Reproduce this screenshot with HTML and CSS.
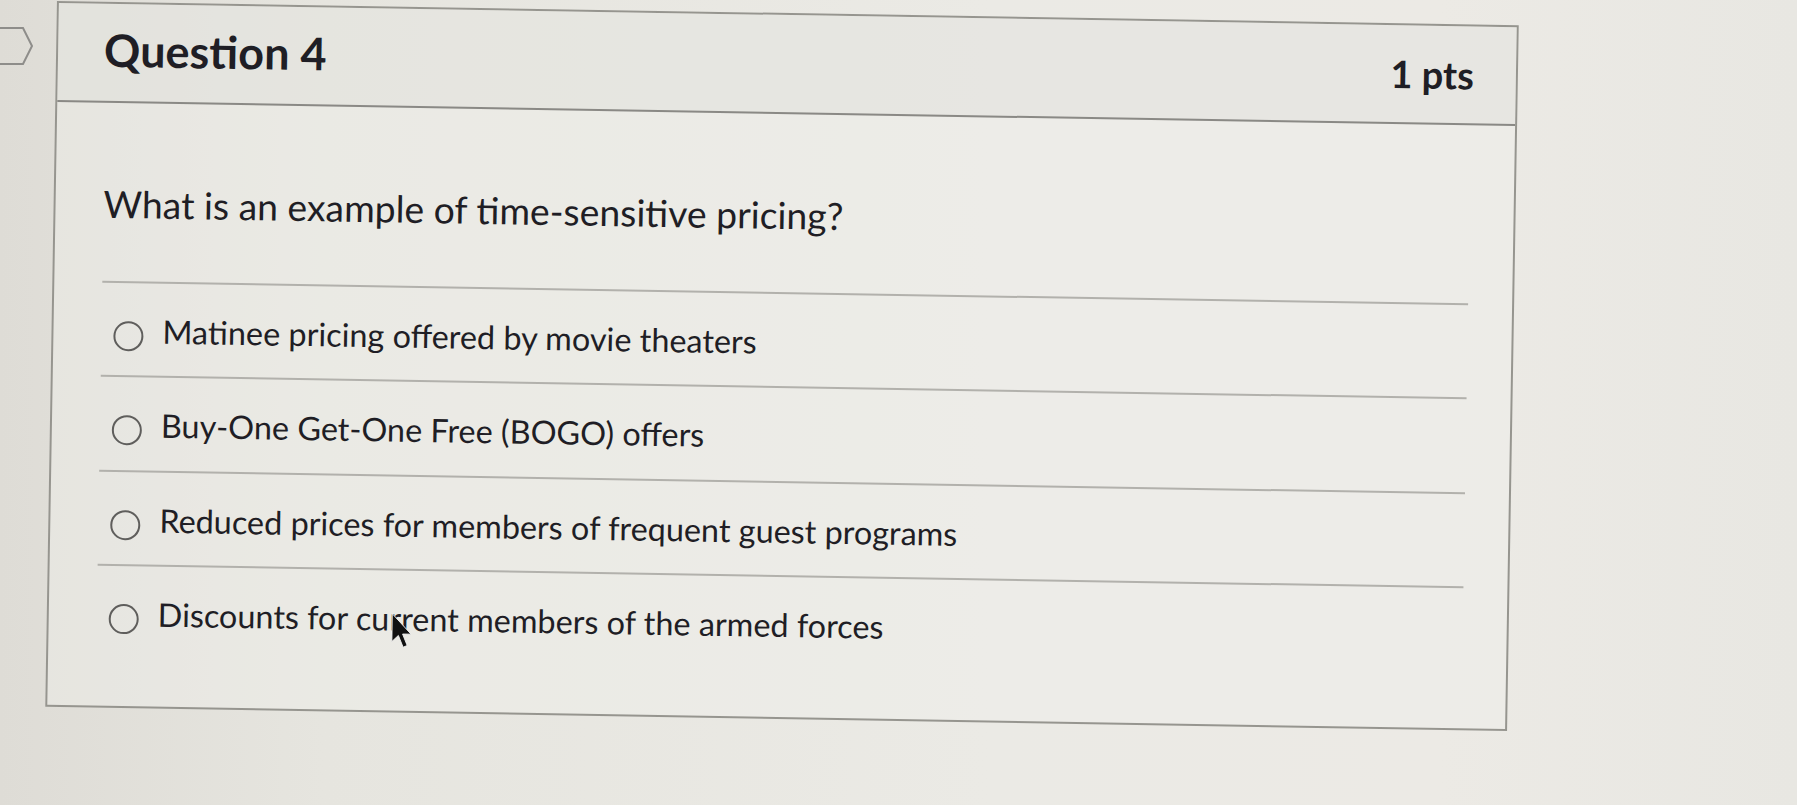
FILE: index.html
```html
<!DOCTYPE html>
<html lang="en">
<head>
<meta charset="utf-8">
<title>Question 4</title>
<link rel="stylesheet" href="styles.css">
</head>
<body>
<div class="page">
  <div class="flag-col">
    <svg class="flag" viewBox="0 0 34 40" aria-hidden="true"><path d="M-4 2 H23 L32 20 L23 38 H-4" /></svg>
  </div>
  <div class="quiz">
    <div class="quiz-header">
      <h2 class="q-title">Question 4</h2>
      <span class="q-points">1 pts</span>
    </div>
    <div class="quiz-body">
      <p class="q-text">What is an example of time-sensitive pricing?</p>
      <div class="answers">
        <label class="answer"><span class="radio"></span><span class="answer-text">Matinee pricing offered by movie theaters</span></label>
        <label class="answer"><span class="radio"></span><span class="answer-text">Buy-One Get-One Free (BOGO) offers</span></label>
        <label class="answer"><span class="radio"></span><span class="answer-text">Reduced prices for members of frequent guest programs</span></label>
        <label class="answer"><span class="radio"></span><span class="answer-text">Discounts for current members of the armed forces</span></label>
      </div>
      <svg class="cursor" viewBox="0 0 12 20" aria-hidden="true"><path d="M0.8 0.8 L0.8 16 L4.3 12.6 L7 19 L9.2 18 L6.6 11.8 L11.2 11.8 Z" /></svg>
    </div>
  </div>
</div>
</body>
</html>
```
FILE: styles.css
```css
html, body {
  margin: 0;
  padding: 0;
}

body {
  width: 1797px;
  height: 805px;
  overflow: hidden;
  font-family: Lato, "Noto Sans", sans-serif;
  color: #1f1e25;
  background: linear-gradient(90deg, #dedcd6 0%, #e6e5df 18%, #ebeae5 55%, #eceae5 80%, #e8e7e2 100%);
}

.page {
  display: flex;
  align-items: flex-start;
  padding-top: 13px;
}

.flag-col {
  flex: none;
  width: 51px;
  padding-top: 13px;
}

.flag {
  display: block;
  width: 34px;
  height: 40px;
  overflow: visible;
}

.flag path {
  fill: none;
  stroke: #8e8d8a;
  stroke-width: 2;
}

.quiz {
  position: relative;
  flex: none;
  width: 1462px;
  height: 706px;
  box-sizing: border-box;
  border: 2px solid #96958f;
  background: rgba(240, 239, 234, 0.45);
  transform: rotate(0.95deg);
  display: flex;
  flex-direction: column;
}

.quiz-header {
  height: 99px;
  box-sizing: border-box;
  padding: 19px 42px 0 46px;
  display: flex;
  justify-content: space-between;
  align-items: baseline;
  border-bottom: 2px solid #8a8985;
  background: rgba(222, 221, 215, 0.35);
}

.q-title {
  margin: 0;
  font-size: 45px;
  font-weight: 700;
  line-height: 1.2;
}

.q-points {
  font-size: 38px;
  font-weight: 700;
  line-height: 1.2;
}

.quiz-body {
  position: relative;
  padding: 0 44px 0 48px;
}

.q-text {
  margin: 0;
  padding-top: 79px;
  font-size: 37.3px;
  line-height: 1.2;
}

.answers {
  margin-top: 54px;
}

.answer {
  display: flex;
  align-items: flex-start;
  border-top: 2px solid #b2b1ac;
  padding: 29px 0 24.5px 12px;
  font-size: 32.4px;
  line-height: 1.2;
}

.radio {
  flex: none;
  width: 30px;
  height: 30px;
  box-sizing: border-box;
  border: 2px solid #5f5e5c;
  border-radius: 50%;
  margin-top: 9px;
  margin-right: 19px;
}

.cursor {
  position: absolute;
  left: 342px;
  top: 504px;
  width: 22px;
  height: 38px;
}

.cursor path {
  fill: #111;
  stroke: #f2f2f2;
  stroke-width: 0.5;
}
```
